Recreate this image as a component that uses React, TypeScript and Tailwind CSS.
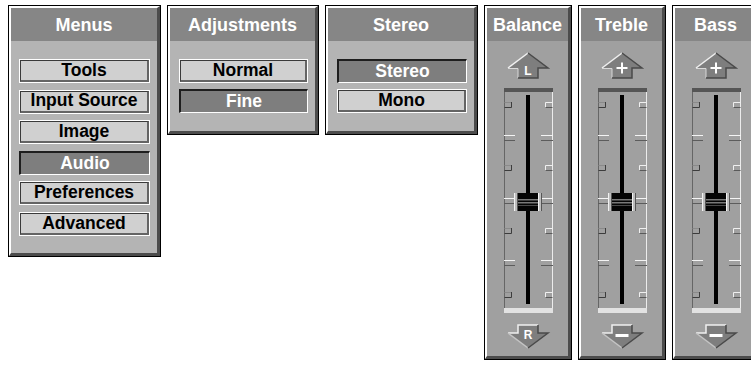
import { ReactNode } from 'react';

const font = { fontFamily: '"Liberation Sans", Arial, sans-serif' };

function Panel({
    title,
    className,
    body,
    children,
}: {
    title: string;
    className: string;
    body: string;
    children?: ReactNode;
}) {
    return (
        <div className={`shrink-0 border border-black ${className}`}>
            <div className="h-full flex flex-col border-t-2 border-l-2 border-t-white border-l-white border-r-[3px] border-b-[3px] border-r-[#4c4c4c] border-b-[#4c4c4c]">
                <div className="h-[33px] shrink-0 bg-[#868686] text-white font-bold text-[18px] flex items-center justify-center leading-none">
                    {title}
                </div>
                <div className={`flex-1 ${body}`}>{children}</div>
            </div>
        </div>
    );
}

function MenuButton({ label, active }: { label: string; active?: boolean }) {
    if (active) {
        return (
            <div className="h-[24px] border-t-2 border-l-2 border-t-[#1e1e1e] border-l-[#1e1e1e] border-r border-b border-r-white border-b-white bg-[#7e7e7e] text-white font-bold text-[17.5px] leading-none flex items-center justify-center">
                {label}
            </div>
        );
    }
    return (
        <div className="h-[24px] border border-white">
            <div className="h-full border-t border-l border-t-[#3a3a3a] border-l-[#3a3a3a] border-r-2 border-b-2 border-r-[#646464] border-b-[#646464] bg-[#d0d0d0] text-black font-bold text-[17.5px] leading-none flex items-center justify-center">
                {label}
            </div>
        </div>
    );
}

function SliderArt({ kind }: { kind: 'balance' | 'tone' }) {
    const shortTicks = [61, 124, 187, 251];
    const longTicks = [94, 157, 219];
    return (
        <svg width="60" height="315" viewBox="0 0 60 315">
            {/* up arrow */}
            <polygon points="30,12 50,27 40,27 40,37 20,37 20,27 10,27" fill="#7e7e7e" />
            <polyline points="10,27 30,12" stroke="#f0f0f0" strokeWidth="1.5" fill="none" />
            <polyline points="10,27.5 20,27.5 20,37" stroke="#d8d8d8" strokeWidth="1" fill="none" />
            <polyline points="30,12 50,27 40,27 40,37 20,37" stroke="#4a4a4a" strokeWidth="1.5" fill="none" />
            {kind === 'balance' ? (
                <text x="30" y="34" textAnchor="middle" fontSize="12" fontWeight="bold" fill="#fff" style={font}>
                    L
                </text>
            ) : (
                <g stroke="#fff" strokeWidth="2">
                    <line x1="24.5" y1="27" x2="35.5" y2="27" />
                    <line x1="30" y1="21.5" x2="30" y2="32.5" />
                </g>
            )}

            {/* frame */}
            <rect x="6" y="47" width="49" height="4" fill="#555" />
            <rect x="6" y="267" width="49" height="5" fill="#e2e2e2" />
            <line x1="6.5" y1="51" x2="6.5" y2="267" stroke="#666" strokeWidth="1" />
            <line x1="54.5" y1="51" x2="54.5" y2="267" stroke="#ececec" strokeWidth="1" />
            {longTicks.map((y) => (
                <g key={y}>
                    <line x1="6" y1={y + 0.5} x2="17" y2={y + 0.5} stroke="#f4f4f4" />
                    <line x1="6" y1={y + 5.5} x2="17" y2={y + 5.5} stroke="#5c5c5c" />
                    <line x1="43" y1={y + 0.5} x2="55" y2={y + 0.5} stroke="#f4f4f4" />
                    <line x1="43" y1={y + 5.5} x2="55" y2={y + 5.5} stroke="#5c5c5c" />
                </g>
            ))}
            {shortTicks.map((y) => (
                <g key={y} fill="none">
                    <polyline points={`6.5,${y + 0.5} 13.5,${y + 0.5}`} stroke="#8a8a8a" />
                    <polyline points={`13.5,${y} 13.5,${y + 5.5} 6.5,${y + 5.5}`} stroke="#3c3c3c" />
                    <polyline points={`54.5,${y + 0.5} 47.5,${y + 0.5} 47.5,${y + 5.5}`} stroke="#f0f0f0" />
                    <polyline points={`47.5,${y + 5.5} 54.5,${y + 5.5}`} stroke="#5a5a5a" />
                </g>
            ))}

            {/* track */}
            <rect x="28" y="54" width="4" height="209" fill="#000" />

            {/* thumb */}
            <rect x="16" y="152" width="3" height="18" fill="#bdbdbd" />
            <line x1="16.5" y1="152" x2="16.5" y2="170" stroke="#f2f2f2" />
            <rect x="19" y="152" width="1" height="18" fill="#555" />
            <rect x="40" y="152" width="3" height="18" fill="#bdbdbd" />
            <line x1="40.5" y1="152" x2="40.5" y2="170" stroke="#f2f2f2" />
            <rect x="43" y="152" width="1" height="18" fill="#555" />
            <rect x="20" y="152" width="20" height="18" fill="#050505" />
            <rect x="20" y="158" width="20" height="1.5" fill="#7a7a7a" />
            <rect x="20" y="161" width="20" height="1.5" fill="#7a7a7a" />
            <rect x="20" y="164" width="20" height="1" fill="#4a4a4a" />

            {/* down arrow */}
            <polygon points="20,284 40,284 40,292 50,292 30,307 10,292 20,292" fill="#7e7e7e" />
            <polyline points="10,292 20,292 20,284 40,284" stroke="#f0f0f0" strokeWidth="1.5" fill="none" />
            <polyline points="10,292 30,307" stroke="#c4c4c4" strokeWidth="1.5" fill="none" />
            <polyline points="40,284 40,292 50,292 30,307" stroke="#4a4a4a" strokeWidth="1.5" fill="none" />
            {kind === 'balance' ? (
                <text x="30" y="298" textAnchor="middle" fontSize="12" fontWeight="bold" fill="#fff" style={font}>
                    R
                </text>
            ) : (
                <rect x="23.5" y="293" width="13" height="3" fill="#fff" />
            )}
        </svg>
    );
}

export default function App() {
    return (
        <div className="w-[751px] h-[366px] overflow-hidden bg-white" style={font}>
            <div className="flex items-start gap-[6px] pl-[8px] pt-[5px]">
                <Panel title="Menus" className="w-[153px] h-[252px]" body="bg-[#b4b4b4]">
                    <div className="flex flex-col gap-[6.6px] pl-[8px] pr-[7px] pt-[18px]">
                        <MenuButton label="Tools" />
                        <MenuButton label="Input Source" />
                        <MenuButton label="Image" />
                        <MenuButton label="Audio" active />
                        <MenuButton label="Preferences" />
                        <MenuButton label="Advanced" />
                    </div>
                </Panel>
                <Panel title="Adjustments" className="w-[152px] h-[130px]" body="bg-[#b4b4b4]">
                    <div className="flex flex-col gap-[6px] pl-[9px] pr-[7px] pt-[18px]">
                        <MenuButton label="Normal" />
                        <MenuButton label="Fine" active />
                    </div>
                </Panel>
                <Panel title="Stereo" className="w-[153px] h-[130px]" body="bg-[#b4b4b4]">
                    <div className="flex flex-col gap-[6px] pl-[9px] pr-[7px] pt-[18px]">
                        <MenuButton label="Stereo" active />
                        <MenuButton label="Mono" />
                    </div>
                </Panel>
                {[
                    { t: 'Balance', k: 'balance' as const },
                    { t: 'Treble', k: 'tone' as const },
                    { t: 'Bass', k: 'tone' as const },
                ].map((s) => (
                    <Panel key={s.t} title={s.t} className="w-[88px] h-[355px]" body="bg-[#a0a0a0] flex justify-center">
                        <SliderArt kind={s.k} />
                    </Panel>
                ))}
            </div>
        </div>
    );
}
